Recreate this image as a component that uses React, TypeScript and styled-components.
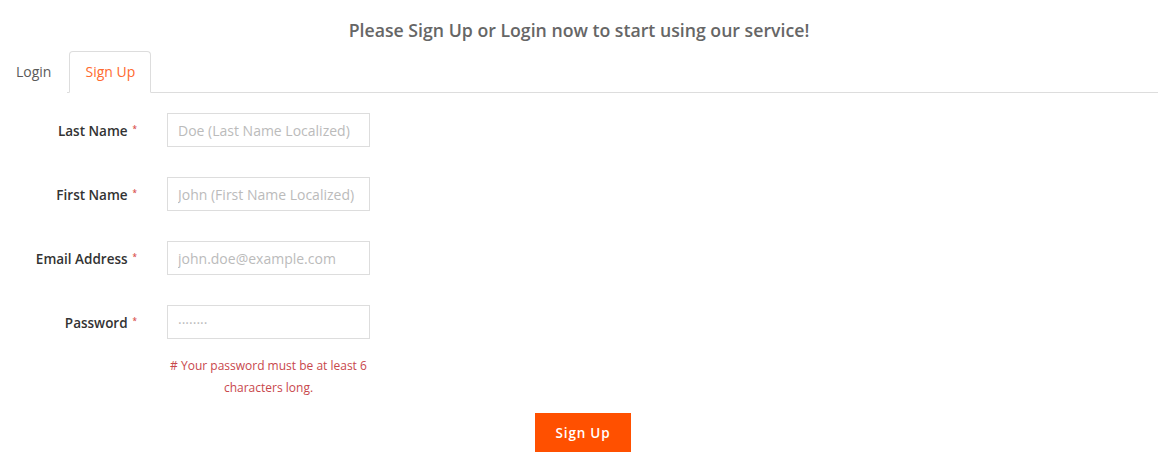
import React from "react";
import styled, { createGlobalStyle } from "styled-components";

const Global = createGlobalStyle`
  html, body { margin: 0; padding: 0; background: #fff; }
  body { font-family: "Open Sans", "Lato", sans-serif; color: #333; }
  * { box-sizing: border-box; }
`;

const Page = styled.div`
  width: 1158px;
  height: 468px;
  overflow: hidden;
`;

const Title = styled.h3`
  margin: 0;
  padding-top: 18px;
  height: 51px;
  text-align: center;
  font-size: 17.7px;
  font-weight: 600;
  color: #666;
  line-height: 24px;
`;

const TabBar = styled.ul`
  list-style: none;
  margin: 0;
  padding: 0;
  display: flex;
  border-bottom: 1px solid #ddd;
`;

const Tab = styled.li<{ $active?: boolean }>`
  margin-right: 2px;
  margin-bottom: -1px;
  padding: 10px 15px;
  font-size: 14px;
  line-height: 20px;
  border: 1px solid ${(p) => (p.$active ? "#ddd" : "transparent")};
  border-bottom-color: ${(p) => (p.$active ? "#fff" : "transparent")};
  border-radius: 4px 4px 0 0;
  background: #fff;
  color: ${(p) => (p.$active ? "#ff6a2f" : "#5a5a5a")};
  cursor: pointer;
`;

const Form = styled.form`
  padding-top: 20px;
  display: flex;
  flex-direction: column;
  gap: 30px;
`;

const Row = styled.div<{ $top?: boolean }>`
  display: grid;
  grid-template-columns: 137px 203px;
  column-gap: 30px;
  align-items: ${(p) => (p.$top ? "start" : "center")};
`;

const Label = styled.label`
  display: flex;
  align-items: center;
  justify-content: flex-end;
  height: 34px;
  padding-top: 1px;
  font-size: 13.5px;
  font-weight: 600;
  color: #333;
  &::after {
    content: "*";
    align-self: flex-start;
    margin-top: 11px;
    color: #d9534f;
    font-size: 8px;
    line-height: 8px;
    margin-left: 5px;
  }
`;

const Input = styled.input`
  width: 203px;
  height: 34px;
  border: 1px solid #ddd;
  border-radius: 0;
  padding: 6px 10px;
  font-family: inherit;
  font-size: 14px;
  color: #555;
  outline: none;
  &::placeholder {
    color: #bbb;
  }
`;

const Field = styled.div`
  display: flex;
  flex-direction: column;
`;

const Help = styled.p`
  margin: 16px 0 0;
  width: 203px;
  text-align: center;
  font-size: 12px;
  line-height: 22px;
  color: #c8474c;
`;

const ButtonRow = styled.div`
  display: flex;
  justify-content: center;
  padding-left: 8px;
  margin-top: -16px;
`;

const Button = styled.button`
  width: 96px;
  height: 39px;
  border: none;
  border-radius: 0;
  background: #ff5000;
  color: #fff;
  font-family: inherit;
  font-size: 13.5px;
  font-weight: 600;
  letter-spacing: 0.8px;
  cursor: pointer;
`;

export default function App() {
  return (
    <Page>
      <Global />
      <Title>Please Sign Up or Login now to start using our service!</Title>
      <TabBar>
        <Tab>Login</Tab>
        <Tab $active>Sign Up</Tab>
      </TabBar>
      <Form onSubmit={(e) => e.preventDefault()}>
        <Row>
          <Label>Last Name</Label>
          <Input placeholder="Doe (Last Name Localized)" />
        </Row>
        <Row>
          <Label>First Name</Label>
          <Input placeholder="John (First Name Localized)" />
        </Row>
        <Row>
          <Label>Email Address</Label>
          <Input placeholder="john.doe@example.com" />
        </Row>
        <Row $top>
          <Label>Password</Label>
          <Field>
            <Input type="password" placeholder="········" />
            <Help># Your password must be at least 6 characters long.</Help>
          </Field>
        </Row>
        <ButtonRow>
          <Button type="submit">Sign Up</Button>
        </ButtonRow>
      </Form>
    </Page>
  );
}
